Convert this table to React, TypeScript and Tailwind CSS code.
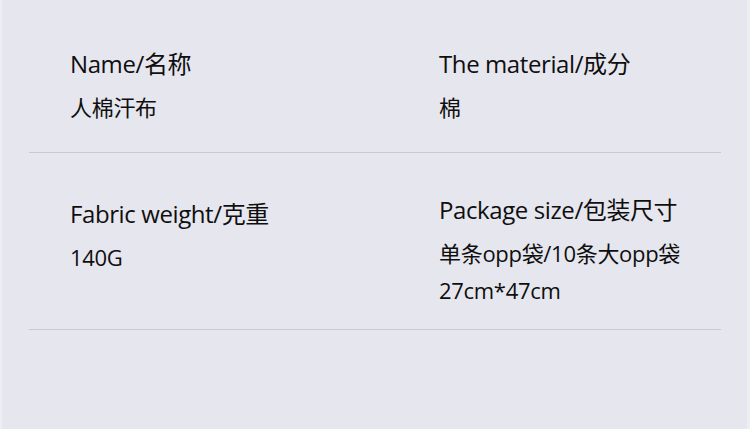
import React from 'react'

interface Spec {
    label: string
    values: string[]
    top: string
}

const rows: Spec[][] = [
    [
        { label: 'Name/名称', values: ['人棉汗布'], top: 'pt-[49px]' },
        { label: 'The material/成分', values: ['棉'], top: 'pt-[49px]' },
    ],
    [
        { label: 'Fabric weight/克重', values: ['140G'], top: 'pt-[46px]' },
        { label: 'Package size/包装尺寸', values: ['单条opp袋/10条大opp袋', '27cm*47cm'], top: 'pt-[42px]' },
    ],
]

const font = { fontFamily: '"Open Sans", "Noto Sans CJK SC", sans-serif' }

export default function App() {
    return (
        <div className="w-[750px] h-[429px] bg-[#e6e6ee] flex text-[#0f0f0f]" style={font}>
            <div className="w-[2px] bg-[#ededf2]" />
            <div className="flex-1 pl-[27px]">
                {rows.map((row, i) => (
                    <div
                        key={i}
                        className={`w-[692px] grid grid-cols-[410px_1fr] border-b border-[#c9c9cf] ${i === 0 ? 'pb-[26px]' : 'pb-[20px]'}`}
                    >
                        {row.map((cell, j) => (
                            <div key={cell.label} className={`${j === 0 ? 'pl-[41px]' : ''} ${cell.top}`}>
                                <div className="text-[24px] leading-[30px] tracking-[-0.4px]">{cell.label}</div>
                                <div className="mt-[10px]">
                                    {cell.values.map(v => (
                                        <div key={v} className="text-[22px] leading-[37px] tracking-[-0.3px]">{v}</div>
                                    ))}
                                </div>
                            </div>
                        ))}
                    </div>
                ))}
            </div>
            <div className="w-[3px] bg-[#ededf2]" />
        </div>
    )
}
